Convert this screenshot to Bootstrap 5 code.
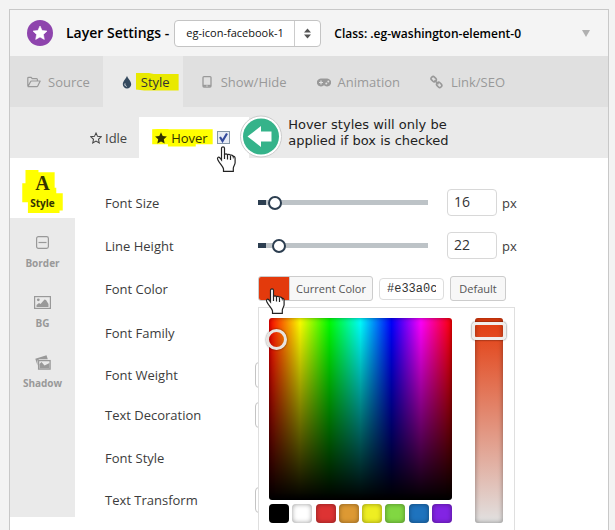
<!DOCTYPE html>
<html lang="en">
<head>
<meta charset="utf-8">
<meta name="viewport" content="width=device-width, initial-scale=1">
<title>Layer Settings</title>
<link href="https://cdn.jsdelivr.net/npm/bootstrap@5.3.0/dist/css/bootstrap.min.css" rel="stylesheet">
<style>
  html { overflow: hidden; }
  body { background: #f3f3f3; font-family: "Open Sans", sans-serif; font-size: 13px; line-height: 18px; color: #3c3c3c; padding: 9px 6px 0 9px; }
  svg { display: block; flex: none; }
  button, input, select { font-family: inherit; }
  .panel { background: #fff; border: 1px solid #c8c8c8; border-bottom: 0; min-height: 100vh; }

  .panel-head { background: #f4f4f4; height: 46px; padding: 0 12px 0 17px; color: #000; }
  .panel-title { font-size: 14px; font-weight: 600; margin: 0 5px 0 13px; }
  .layer-select { appearance: none; width: 147px; height: 27px; border: 1px solid #c4c4c4; border-radius: 4px; font-size: 11px; line-height: 18px; padding: 3px 28px 3px 11px; color: #111;
    background: #fff url("data:image/svg+xml,%3Csvg xmlns='http://www.w3.org/2000/svg' width='26' height='25'%3E%3Cpath d='M.5 0v25' stroke='%23ccc'/%3E%3Cpath d='M10 11.500l3.500-4 3.500 4zM10 13.500l3.500 4 3.500-4z' fill='%23555'/%3E%3C/svg%3E") right center no-repeat; }
  .layer-class { font-size: 12px; font-weight: 600; margin-left: 13px; padding-top: 2px; }
  .collapse-btn { width: 20px; height: 20px; }

  .main-tabs { background: #e0e0e0; height: 51px; }
  .main-tabs .tab-link { padding: 0 13px 0 17px; gap: 7px; color: #999; text-decoration: none; }
  .main-tabs .tab-link.active { background: #eaeaea; color: #333; }
  .icon-box { width: 14px; height: 14px; }

  .state-strip { background: #eaeaea; height: 51px; padding-left: 80px; }
  .state-tab { height: 41px; gap: 3px; color: #444; text-decoration: none; }
  .state-hover { background: #fff; width: 110px; margin-left: 12px; padding-left: 16px; gap: 9px; }
  .state-hover .tab-text { gap: 4px; color: #333300; text-decoration: none; }
  .tick { appearance: none; width: 13px; height: 13px; border: 1px solid #8496a8; background: #e6ebf5; flex: none; }
  .tick:checked { background: #e6ebf5 url("data:image/svg+xml,%3Csvg xmlns='http://www.w3.org/2000/svg' width='11' height='11'%3E%3Cpath d='M2 5l2.500 4L9 1.500' fill='none' stroke='%23334a9c' stroke-width='2.200'/%3E%3C/svg%3E") center no-repeat; }
  .note { font: 13px/16px Verdana, "DejaVu Sans", sans-serif; color: #222; padding-bottom: 9px; margin-left: 5px; }
  .note-badge { margin: 0 0 0 -10px; z-index: 1; }

  .marked { position: relative; z-index: 0; }
  .marked::before { content: ""; position: absolute; z-index: -1; background: #ff0; }
  .mark-tab::before { inset: 0 -9px 0 -5px; background: #e9e900; clip-path: polygon(0 0, 25% 0, 42% 8%, 100% 8%, 100% 100%, 20% 100%, 0 94%); }
  .mark-hover::before { inset: 0 -5px 0 -3px; clip-path: polygon(0 4%, 27% 0, 27% 4%, 100% 4%, 100% 88%, 72% 88%, 72% 100%, 26% 100%, 26% 88%, 0 88%); }
  .mark-side::before { inset: -3px -8px; clip-path: polygon(8% 0, 40% 0, 40% 5%, 80% 5%, 80% 41%, 84% 41%, 84% 54%, 100% 54%, 100% 94%, 92% 94%, 92% 100%, 14% 100%, 14% 75%, 0 75%, 0 31%, 8% 31%); }

  .side-nav { width: 65px; min-height: 359px; background: #eaeaea; }
  .side-link { height: 60px; font-size: 10px; line-height: 14px; font-weight: 700; color: #999; text-decoration: none; gap: 5px; padding-top: 15px; }
  .side-link.active { background: #fff; color: #333300; }
  .side-link .icon-slot { height: 18px; }
  .side-link .marked { gap: 3px; }
  .glyph-a { font: 700 20px/20px "Liberation Serif", serif; }

  .fields { padding: 23px 0 0 30px; }
  .field { height: 43px; }
  .field-family { height: 45px; }
  .field-select { height: 40px; }
  .field-style { height: 45px; }
  .field-label { width: 153px; flex: none; }
  .mini-select { width: 140px; height: 26px; margin-left: -3px; border: 1px solid #c4c4c4; border-radius: 4px; background: #fff; font-size: 12px; }
  .num { width: 50px; height: 27px; border: 1px solid #d8d8d8; border-radius: 4px; font-size: 14px; padding: 0 6px 2px; color: #333; margin: 0 5px 0 19px; }
  .slide { appearance: none; width: 170px; height: 14px; background: linear-gradient(#2c3e50, #2c3e50) 0 center / 8px 5px no-repeat, linear-gradient(#bdc3c7, #bdc3c7) 0 center / 100% 5px no-repeat; }
  .slide::-webkit-slider-thumb { appearance: none; width: 14px; height: 14px; border: 2px solid #2c3e50; border-radius: 50%; background: #fff; }
  .slide::-moz-range-thumb { box-sizing: border-box; width: 14px; height: 14px; border: 2px solid #2c3e50; border-radius: 50%; background: #fff; }
  .wp-btn { height: 25px; border: 1px solid #ccc; border-radius: 3px; background: #f7f7f7; font-size: 11px; line-height: 16px; color: #555; padding: 0; }
  .current-color { width: 115px; }
  .current-color .chip { width: 30px; background: #e33a0c; border-radius: 2px 0 0 2px; }
  .current-color .chip-text { border-left: 1px solid #ccc; }
  .hex { width: 65px; height: 22px; border: 1px solid #ddd; border-radius: 4px; font: 12px/16px "Liberation Mono", monospace; padding: 0 7px; color: #333; margin: 0 6px; }
  .default-btn { width: 56px; }

  .picker { position: absolute; top: 100%; left: 0; z-index: 2; width: 257px; margin-top: 6px; background: #fff; border: 1px solid #dfdfdf; padding: 10px 11px 10px 10px; }
  .spectrum { position: relative; width: 183px; height: 182px; border-radius: 3px;
    background: linear-gradient(rgba(0,0,0,0), #000), linear-gradient(90deg, #f00, #ff0 17%, #0f0 33%, #0ff 50%, #00f 67%, #f0f 83%, #f00); }
  .spectrum, .strip, .swatch { box-shadow: inset 0 0 5px rgba(0,0,0,.4); }
  .spectrum-dot { position: absolute; left: -3px; top: 11px; width: 21px; height: 21px; border: 3px solid #e8e4e0; border-radius: 50%; box-shadow: 0 0 2px rgba(0,0,0,.6); }
  .strip { position: relative; width: 28px; border-radius: 3px; background: linear-gradient(#e33a0c, #e1e1e1); }
  .strip-handle { position: absolute; left: -3px; right: -3px; top: 4px; height: 18px; border: 3px solid #f0eeec; border-radius: 4px; box-shadow: 0 0 2px rgba(0,0,0,.8); }
  .palette { margin-top: 4px; }
  .swatch { width: 20px; height: 19px; border: 0; padding: 0; border-radius: 4px; }
  .hand { position: absolute; z-index: 3; pointer-events: none; }
  .hand-tick { left: -1px; top: 15px; }
  .hand-chip { left: 7px; top: 12px; }
</style>
<script src="https://cdn.jsdelivr.net/npm/bootstrap@5.3.0/dist/js/bootstrap.bundle.min.js"></script>
</head>
<body>
<svg width="0" height="0" class="position-absolute" aria-hidden="true">
  <symbol id="hand" viewBox="0 0 20 26">
    <path d="M5.500 2.200C5.500.5 8.500.5 8.500 2.200V9c0-1.500 3-1.500 3 .2 0-1.400 3-1.200 3 .6 0-1.300 2.500-1 2.800 1 .3-.8 1.800-.2 1.800 1.500v4.500c0 2.200-1.800 3.200-1.800 5.500v3H7.500v-2.500C7 20.500 3.500 17.500 1.800 13.800.8 11.500 2.500 10.200 4 12l1.500 2z" fill="#fff" stroke="#222" stroke-width="1.200"/>
    <path d="M8.500 8.500V13M11.500 9v4.500M14.500 10v4" stroke="#222" stroke-width="1.200" fill="none"/>
  </symbol>
</svg>

<main class="panel">
  <header class="panel-head d-flex align-items-center">
    <svg width="26" height="26" viewBox="0 0 26 26" aria-hidden="true"><circle cx="13" cy="13" r="13" fill="#8e44ad"/><path d="M13 6l2.100 4.500 4.900.6-3.600 3.400.9 4.900-4.300-2.400-4.300 2.400.9-4.900L6 11.100l4.900-.6z" fill="#fff" stroke="#fff" stroke-width=".6" stroke-linejoin="round"/></svg>
    <label class="panel-title text-nowrap" for="layer">Layer Settings -</label>
    <select class="layer-select" id="layer"><option>eg-icon-facebook-1</option></select>
    <span class="layer-class text-nowrap">Class: .eg-washington-element-0</span>
    <button class="collapse-btn btn p-0 border-0 ms-auto d-flex align-items-center justify-content-center" type="button" aria-label="Collapse">
      <svg width="8" height="7" viewBox="0 0 8 7"><path d="M0 0h8L4 7z" fill="#b0b0b0"/></svg>
    </button>
  </header>

  <nav class="main-tabs d-flex align-items-stretch">
    <a class="tab-link d-flex align-items-center" href="#source">
      <svg class="icon-box" viewBox="0 0 14 14" fill="none" stroke="#999" stroke-width="1.200" stroke-linejoin="round"><path d="M.8 11V3.200c0-.6.3-.9.9-.9h2.500l1 1.400h4.300c.6 0 .9.300.9.900v1.300M1 11.500l2.500-4.800c.2-.5.500-.7 1-.7h8.700l-2.300 4.800c-.3.600-.6.900-1.200.9H1.800c-.4 0-.7 0-.8-.2z"/></svg>
      <span>Source</span></a>
    <a class="tab-link active d-flex align-items-center" href="#style">
      <svg class="icon-box" viewBox="0 0 14 14"><path d="M7 .7c.6 2.600 4.200 5.300 4.200 8.500a4.200 4.200 0 0 1-8.400 0C2.800 6 6.400 3.300 7 .7z" fill="#34495e"/><path d="M5 8.500c-.4 1.500.4 2.600 1.600 2.900" stroke="#fff" stroke-width=".9" fill="none"/></svg>
      <span class="marked mark-tab">Style</span></a>
    <a class="tab-link d-flex align-items-center" href="#visibility">
      <svg class="icon-box" viewBox="0 0 14 14"><rect x="3" y="1.600" width="8" height="10.500" rx="1" fill="none" stroke="#999" stroke-width="1.300"/><path d="M3 9.800h8v2H3z" fill="#999"/><path d="M6.300 10.400h1.400v1H6.300z" fill="#e0e0e0"/></svg>
      <span>Show/Hide</span></a>
    <a class="tab-link d-flex align-items-center" href="#animation">
      <svg class="icon-box" viewBox="0 0 14 14"><path d="M4 3.500h6a4 4 0 1 1-2.500 7h-1A4 4 0 1 1 4 3.500z" fill="#999"/><path d="M4 5.500v4M2 7.500h4" stroke="#e0e0e0" stroke-width="1.200"/><circle cx="9.300" cy="8.400" r="1" fill="#e0e0e0"/><circle cx="11.300" cy="6.600" r="1" fill="#e0e0e0"/></svg>
      <span>Animation</span></a>
    <a class="tab-link d-flex align-items-center" href="#link">
      <svg class="icon-box" viewBox="0 0 14 14" fill="none" stroke="#999" stroke-width="1.600"><rect x="-2.500" y="-2" width="5.500" height="4" rx="1.800" transform="translate(3.500 4) rotate(45)"/><rect x="-2.500" y="-2" width="5.500" height="4" rx="1.800" transform="translate(9 9.700) rotate(45)"/><path d="M4.500 5.200l4 4"/></svg>
      <span>Link/SEO</span></a>
  </nav>

  <div class="state-strip d-flex align-items-end">
    <a class="state-tab d-flex align-items-center" href="#idle">
      <svg width="12" height="12" viewBox="0 0 14 14"><path d="M7 1.200l1.800 3.900 4.300.5-3.200 2.900.9 4.200L7 10.600l-3.800 2.100.9-4.200L.9 5.600l4.300-.5z" fill="none" stroke="#444" stroke-width="1.200"/></svg>
      <span>Idle</span></a>
    <div class="state-tab state-hover d-flex align-items-center">
      <a class="tab-text marked mark-hover d-flex align-items-center" href="#hover">
        <svg width="12" height="12" viewBox="0 0 14 14"><path d="M7 .3l2 4.400 4.900.6-3.600 3.300 1 4.800L7 11l-4.300 2.400 1-4.800L.1 5.300 5 4.700z" fill="#333300"/></svg>
        <span>Hover</span></a>
      <span class="position-relative d-flex">
        <input class="tick" type="checkbox" checked aria-label="Enable hover styles">
        <svg class="hand hand-tick" width="20" height="26"><use href="#hand"/></svg>
      </span>
    </div>
    <svg class="note-badge" width="44" height="43" viewBox="0 0 44 43" aria-hidden="true"><circle cx="22" cy="21.500" r="20.500" fill="#fff" stroke="#ccc"/><circle cx="22" cy="21.500" r="18" fill="#35b38a"/><path d="M8.500 21.500L22 11v5.500h10.500v10H22V32z" fill="#fff"/></svg>
    <div class="note text-nowrap">Hover styles will only be<br>applied if box is checked</div>
  </div>

  <div class="d-flex align-items-start">
    <nav class="side-nav flex-shrink-0">
      <a class="side-link active d-flex flex-column align-items-center" href="#text-style">
        <span class="marked mark-side d-flex flex-column align-items-center"><span class="glyph-a">A</span><span>Style</span></span></a>
      <a class="side-link d-flex flex-column align-items-center" href="#border">
        <span class="icon-slot d-flex align-items-center"><svg width="13" height="13" viewBox="0 0 13 13"><rect x=".6" y=".6" width="11.800" height="11.800" rx="1.800" fill="none" stroke="#999" stroke-width="1.200"/><path d="M2.500 6.500h8" stroke="#999" stroke-width="1.200"/></svg></span>
        <span>Border</span></a>
      <a class="side-link d-flex flex-column align-items-center" href="#bg">
        <span class="icon-slot d-flex align-items-center"><svg width="17" height="13" viewBox="0 0 17 13"><rect x=".6" y=".6" width="15.800" height="11.800" fill="none" stroke="#999" stroke-width="1.200"/><circle cx="4.300" cy="3.800" r="1.400" fill="#999"/><path d="M2.500 11V9l2.500-2 1.500 1L10.500 3.500 12 4l2.500 4v3z" fill="#999"/></svg></span>
        <span>BG</span></a>
      <a class="side-link d-flex flex-column align-items-center" href="#shadow">
        <span class="icon-slot d-flex align-items-center"><svg width="16" height="15" viewBox="0 0 16 15"><path d="M.3 3.800L11.500.3l1.300 4H4.300L2.500 5.500v5z" fill="#999"/><rect x="3.600" y="5.600" width="11.500" height="8.500" fill="#eaeaea" stroke="#999" stroke-width="1.300"/><path d="M4.500 13.500V9l2-2 3 3.500L14.500 8v5.500z" fill="#999"/></svg></span>
        <span>Shadow</span></a>
    </nav>

    <form class="fields flex-grow-1">
      <div class="field d-flex align-items-center"><label class="field-label" for="size">Font Size</label>
        <input class="slide" type="range" min="0" max="250" value="16" aria-label="Font size slider"><input class="num" id="size" type="text" value="16"><span>px</span></div>
      <div class="field d-flex align-items-center"><label class="field-label" for="line">Line Height</label>
        <input class="slide" type="range" min="0" max="250" value="22" aria-label="Line height slider"><input class="num" id="line" type="text" value="22"><span>px</span></div>
      <div class="field d-flex align-items-center"><label class="field-label" for="hex">Font Color</label>
        <div class="position-relative d-flex align-items-center">
          <button class="wp-btn current-color d-flex align-items-stretch" type="button"><span class="chip"></span><span class="chip-text flex-grow-1 d-flex align-items-center justify-content-center text-nowrap">Current Color</span></button>
          <input class="hex" id="hex" type="text" value="#e33a0c">
          <button class="wp-btn default-btn" type="button">Default</button>
          <svg class="hand hand-chip" width="20" height="26"><use href="#hand"/></svg>
          <div class="picker">
            <div class="d-flex justify-content-between">
              <div>
                <div class="spectrum"><span class="spectrum-dot"></span></div>
                <div class="palette d-flex justify-content-between">
                  <button class="swatch" type="button" aria-label="Black" style="background:#000"></button>
                  <button class="swatch" type="button" aria-label="White" style="background:#fff"></button>
                  <button class="swatch" type="button" aria-label="Red" style="background:#dd3333"></button>
                  <button class="swatch" type="button" aria-label="Orange" style="background:#dd9933"></button>
                  <button class="swatch" type="button" aria-label="Yellow" style="background:#eeee22"></button>
                  <button class="swatch" type="button" aria-label="Green" style="background:#81d742"></button>
                  <button class="swatch" type="button" aria-label="Blue" style="background:#1e73be"></button>
                  <button class="swatch" type="button" aria-label="Purple" style="background:#8224e3"></button>
                </div>
              </div>
              <div class="strip"><span class="strip-handle"></span></div>
            </div>
          </div>
        </div></div>
      <div class="field field-family d-flex align-items-center"><span class="field-label">Font Family</span></div>
      <div class="field field-select d-flex align-items-center"><label class="field-label" for="weight">Font Weight</label><select class="mini-select" id="weight"></select></div>
      <div class="field field-select d-flex align-items-center"><label class="field-label" for="deco">Text Decoration</label><select class="mini-select" id="deco"></select></div>
      <div class="field field-style d-flex align-items-center"><span class="field-label">Font Style</span></div>
      <div class="field field-select d-flex align-items-center"><label class="field-label" for="transform">Text Transform</label><select class="mini-select" id="transform"></select></div>
    </form>
  </div>
</main>
</body>
</html>
